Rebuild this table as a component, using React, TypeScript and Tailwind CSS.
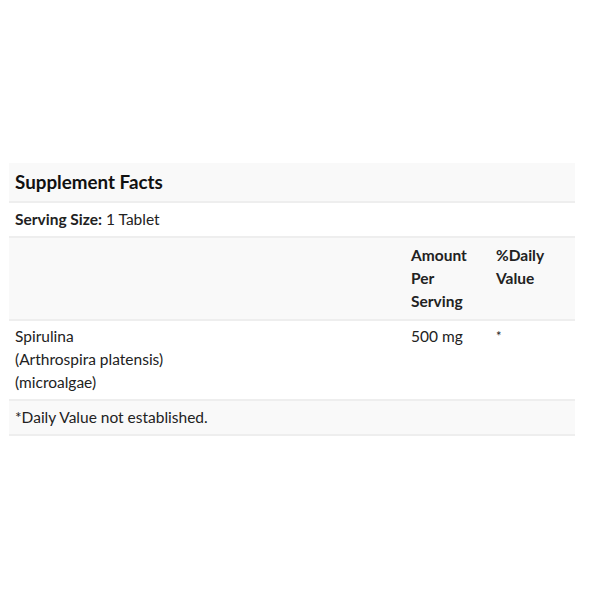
export default function App() {
  return (
    <div className="min-h-screen bg-white pt-[163px] px-[9px] font-['Lato','Liberation_Sans',sans-serif] text-[#222]">
      <div className="w-[566px]">
        {/* Title */}
        <div className="bg-[#f9f9f9] border-b-2 border-[#eeeeee] px-[6px] h-[40px] flex items-center">
          <h2 className="text-[18.8px] font-bold text-[#111]">Supplement Facts</h2>
        </div>

        {/* Serving size */}
        <div className="border-b-2 border-[#eeeeee] px-[6px] h-[35px] flex items-center text-[15.5px]">
          <span className="font-bold">Serving Size:</span>
          <span className="ml-1">1 Tablet</span>
        </div>

        <table className="w-full table-fixed border-collapse text-[15.5px] leading-[23px]">
          <colgroup>
            <col className="w-[396px]" />
            <col className="w-[85px]" />
            <col className="w-[85px]" />
          </colgroup>
          <thead>
            <tr className="bg-[#f9f9f9] border-b-2 border-[#eeeeee]">
              <th className="px-[6px] pt-[6px] pb-[6px]"></th>
              <th className="px-[6px] pt-[6px] pb-[6px] text-left align-top font-bold">
                Amount Per Serving
              </th>
              <th className="px-[6px] pt-[6px] pb-[6px] text-left align-top font-bold">
                %Daily Value
              </th>
            </tr>
          </thead>
          <tbody>
            <tr className="border-b-2 border-[#eeeeee]">
              <td className="px-[6px] pt-[4px] pb-[5px] align-top">
                Spirulina
                <br />
                (Arthrospira platensis)
                <br />
                (microalgae)
              </td>
              <td className="px-[6px] pt-[4px] pb-[5px] align-top">500 mg</td>
              <td className="px-[6px] pt-[4px] pb-[5px] align-top text-[13px] leading-[23px]">*</td>
            </tr>
          </tbody>
        </table>

        {/* Footnote */}
        <div className="bg-[#f9f9f9] border-b-2 border-[#eeeeee] px-[6px] h-[35px] flex items-center text-[15.5px]">
          *Daily Value not established.
        </div>
      </div>
    </div>
  )
}
